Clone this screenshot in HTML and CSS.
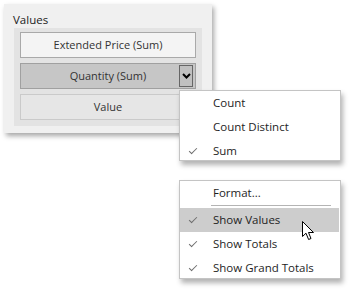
FILE: index.html
```html
<!DOCTYPE html>
<html lang="en">
<head>
    <meta charset="UTF-8">
    <title>Values</title>
    <link rel="stylesheet" href="styles.css">
</head>
<body>
    <div class="scene">
        <div class="panel">
            <div class="panel-title">Values</div>
            <div class="well">
                <div class="field">Extended Price (Sum)</div>
                <div class="field active">
                    Quantity (Sum)
                    <span class="drop">
                        <svg width="9" height="6" viewBox="0 0 9 6"><path d="M1 1 L4.5 4.5 L8 1" fill="none" stroke="#000" stroke-width="2"/></svg>
                    </span>
                </div>
                <div class="field empty">Value</div>
            </div>
        </div>

        <ul class="menu menu-summary">
            <li>Count</li>
            <li>Count Distinct</li>
            <li class="checked">Sum</li>
        </ul>

        <ul class="menu menu-options">
            <li>Format...</li>
            <li class="sep"></li>
            <li class="checked hover">Show Values</li>
            <li class="checked">Show Totals</li>
            <li class="checked">Show Grand Totals</li>
        </ul>

        <!-- mouse pointer over the highlighted item -->
        <svg class="cursor" width="13" height="20" viewBox="0 0 13 20">
            <path d="M0.5 0.5 L0.5 15.5 L4 12.2 L6.6 18.5 L9 17.5 L6.5 11.5 L11.5 11.5 Z" fill="#fff" stroke="#000" stroke-width="1" stroke-linejoin="round"/>
        </svg>
    </div>
</body>
</html>
```

FILE: styles.css
```css
body { margin: 0; background: #fff; font-family: "Open Sans", "Noto Sans", sans-serif; font-size: 11px; color: #222; }
.scene { position: relative; width: 351px; height: 292px; overflow: hidden; }

.panel { margin: 4px 0 0 4px; width: 208px; padding: 8px 10px 7px 10px; box-sizing: border-box; background: #f0f0f0; box-shadow: 2px 3px 5px rgba(0,0,0,0.35); }
.panel-title { height: 16px; line-height: 16px; margin: 0 0 0 -1px; font-size: 11.5px; color: #222; }
.well { background: #e3e3e3; padding: 4px 6px 6px 6px; display: flex; flex-direction: column; gap: 5px; }
.field { position: relative; height: 24px; line-height: 24px; text-align: center; border: 1px solid #a9a9a9; background: #f4f4f4; color: #333; }
.field.active { background: #c6c6c6; border-color: #a0a0a0; }
.field.empty { background: #e6e6e6; border-color: #cacaca; }
.drop { position: absolute; right: 2px; top: 1px; width: 12px; height: 20px; border: 1px solid #666; background: #c0c0c0; display: flex; align-items: center; justify-content: center; }

.menu { position: absolute; left: 179px; width: 162px; margin: 0; padding: 0; list-style: none; background: #fff; border: 1px solid #c4c4c4; box-sizing: border-box; box-shadow: 2px 4px 5px rgba(0,0,0,0.3); font-size: 11.5px; color: #1e1e1e; }
.menu li { position: relative; height: 24px; line-height: 24px; padding-left: 33px; }
.menu li.checked::before { content: ""; position: absolute; left: 9px; top: 9px; width: 7px; height: 3px; border-left: 1.5px solid #6d6d6d; border-bottom: 1.5px solid #6d6d6d; transform: rotate(-45deg); }
.menu li.hover { background: #cdcdcd; margin-right: 1px; }
.menu li.sep { height: 1px; margin: 0 9px 2px 31px; padding: 0; background: #b4b4b4; }
.menu-summary { top: 90px; height: 71px; }
.menu-options { top: 180px; height: 99px; }

.cursor { position: absolute; left: 302px; top: 221px; }
```
